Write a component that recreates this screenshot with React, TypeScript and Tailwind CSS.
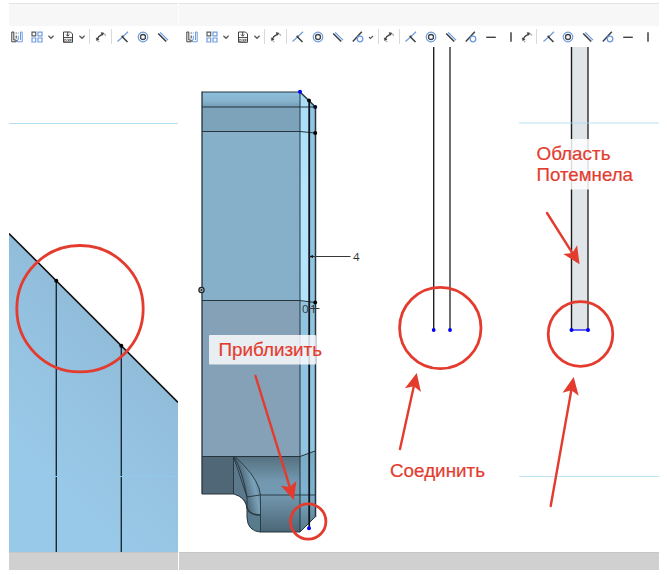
import type { ReactNode } from 'react';

const RED = '#e43b2f';
const INK = '#3f4143';
const BLUE = '#6e9bdf';

function Cell({ w, children }: { w: string; children: ReactNode }) {
  return <div className={`flex h-full shrink-0 items-center justify-center ${w}`}>{children}</div>;
}

function Icon({ children }: { children: ReactNode }) {
  return (
    <svg className="h-3 w-3 shrink-0" viewBox="0 0 12 12" fill="none" stroke={INK} strokeWidth="1.2">
      {children}
    </svg>
  );
}

const Structure = () => (
  <Icon>
    <path d="M.8 1h2v8h2.400v1.800H.8zM5.200 1.500v1.200M5.200 4.500v3" strokeWidth="1" />
    <path d="M7.300 1.500v1.200M7.300 4.500v4.300H6.500v2h4.700V1H9.500v8" stroke={BLUE} strokeWidth="1" />
  </Icon>
);
const Pattern = () => (
  <Icon>
    <path d="M1 1.200h3.700v3.600H1z" stroke="#5b5d60" />
    <path d="M7 1.200h4v3.600H7zM1 7h3.700v4H1zM7 7h4v4H7z" stroke={BLUE} />
  </Icon>
);
const Dxf = () => (
  <Icon>
    <path d="M1.500 7V1h7l2 2v4M5.700 1v4M4 3.500l1.700 1.700L7.400 3.500M1.500 6.600v4.700h9V6.600z" strokeWidth="1" />
    <text x="2" y="10.700" fontSize="4" fontWeight="bold" fill={INK} stroke="none" fontFamily="Liberation Sans, sans-serif" textLength="8">DXF</text>
  </Icon>
);
const Dimension = () => (
  <Icon>
    <path d="M2.200 8.200Q4 4.500 8 2.800" strokeWidth="1.400" />
    <path d="M1.200 6.800l.4 2.900 2.600-1.300zM6 1.500l3 .5-1.600 2.400z" fill={INK} strokeWidth=".4" />
    <path d="M3 10l1.200 1.200M9.200 2.800L11 4.500" stroke="#aaa" />
  </Icon>
);
const Coincident = () => (
  <Icon>
    <path d="M.5 10.500L4.700 6.700M6.300 5.300L11 .7" stroke={BLUE} />
    <path d="M5.500 6l5 5" strokeWidth="1.600" />
    <circle cx="5.500" cy="5.800" r="1.200" fill={INK} stroke="none" />
  </Icon>
);
const Concentric = () => (
  <Icon>
    <circle cx="6" cy="6" r="4.800" stroke={BLUE} />
    <circle cx="6" cy="6" r="2.500" strokeWidth="1.300" />
  </Icon>
);
const Parallel = () => (
  <Icon>
    <path d="M1.200 2.500l8 8" strokeWidth="1.700" />
    <path d="M3.200 1.300L11 9.200" stroke={BLUE} />
  </Icon>
);
const Tangent = () => (
  <Icon>
    <path d="M.8 10.500L9.800 .8" strokeWidth="1.500" />
    <circle cx="8" cy="8" r="2.800" stroke={BLUE} strokeWidth="1.300" />
  </Icon>
);
const Horizontal = () => <Icon><path d="M1.200 6.300h9.600" strokeWidth="1.400" /></Icon>;
const Vertical = () => <Icon><path d="M6 1.200v9.600" strokeWidth="1.500" /></Icon>;
const Chevron = () => (
  <svg className="h-1.5 w-1.5 shrink-0" viewBox="0 0 6 6" fill="none" stroke="#555" strokeWidth="1.200">
    <path d="M.4 1.800L3 4.300l2.600-2.500" />
  </svg>
);
const Tick = () => (
  <svg className="h-1.5 w-1.5 shrink-0" viewBox="0 0 6 6" fill="none" stroke="#555" strokeWidth="1.100">
    <path d="M1 3l1.400 1.500L5 2" />
  </svg>
);
const Separator = () => <div className="h-[15px] w-px bg-[#d9d9d9]" />;

function LeadingTools() {
  return (
    <>
      <Cell w="w-4"><Structure /></Cell>
      <Cell w="ml-1 w-4"><Pattern /></Cell>
      <Cell w="w-3"><Chevron /></Cell>
      <Cell w="w-[22px]"><Dxf /></Cell>
      <Cell w="w-1.5"><Chevron /></Cell>
      <Cell w="w-2"><Separator /></Cell>
      <Cell w="w-4"><Dimension /></Cell>
      <Cell w="w-1"><Separator /></Cell>
      <Cell w="w-[19px]"><Coincident /></Cell>
      <Cell w="w-[21px]"><Concentric /></Cell>
      <Cell w="w-5"><Parallel /></Cell>
    </>
  );
}

function Panel({ w, tools, children }: { w: string; tools: ReactNode; children: ReactNode }) {
  return (
    <section className={`flex h-full shrink-0 flex-col overflow-hidden ${w}`}>
      <div className="h-[23px] shrink-0 border-t border-[#e3e3e3] bg-[#f7f7f7]" />
      <div className="flex h-[21px] shrink-0 items-center">{tools}</div>
      <div className="h-[505px] shrink-0">{children}</div>
      <div className="h-[18px] shrink-0 border-t border-[#c6c6c6] bg-[#d0d0d0]" />
    </section>
  );
}

function Arrow({ x1, y1, x2, y2 }: { x1: number; y1: number; x2: number; y2: number }) {
  const angle = (Math.atan2(y2 - y1, x2 - x1) * 180) / Math.PI;
  const length = Math.hypot(x2 - x1, y2 - y1);
  return (
    <g transform={`translate(${x2} ${y2}) rotate(${angle})`} fill={RED} stroke="none">
      <path d={`M${-length} 0H-12`} stroke={RED} strokeWidth="2.400" strokeLinecap="round" />
      <path d="M1 0L-16.500-8.200-12.500 0-16.500 8.200z" />
    </g>
  );
}

function Ring({ x, y, r }: { x: number; y: number; r: number }) {
  return <circle cx={x} cy={y} r={r} fill="none" stroke={RED} strokeWidth="2.800" />;
}

function Label({ x, y, width, children }: { x: number; y: number; width: number; children: string }) {
  return (
    <text x={x} y={y} fill={RED} stroke={RED} strokeWidth=".2" fontSize="18.500" fontFamily="Liberation Sans, Arial, sans-serif" textLength={width} lengthAdjust="spacingAndGlyphs">
      {children}
    </text>
  );
}

function CloseUp() {
  return (
    <svg className="block h-full w-full" viewBox="9 47 169 505">
      <defs>
        <linearGradient id="slope" gradientUnits="userSpaceOnUse" x1="115" y1="340" x2="15" y2="440">
          <stop stopColor="#91bddb" />
          <stop offset="1" stopColor="#99c9e8" />
        </linearGradient>
      </defs>
      <path d="M9 123.500H178" stroke="#b5def0" />
      <path d="M9 233.500L178 402.500V552H9z" fill="url(#slope)" />
      <path d="M9 233.500L178 402.500" stroke="#111" strokeWidth="1.600" />
      <path d="M56.300 281V552M121.300 346V552" stroke="#1c2a33" strokeWidth="1.400" />
      <path d="M9 476.500H178" stroke="#91c8eb" />
      <circle cx="56.300" cy="280.700" r="2" />
      <circle cx="121.300" cy="345.800" r="2" />
      <Ring x={80} y={308.7} r={63.2} />
    </svg>
  );
}

function Body() {
  return (
    <svg className="block h-full w-full" viewBox="179 47 198 505">
      <defs>
        <linearGradient id="cap" x1="0" y1="0" x2="0" y2="1">
          <stop stopColor="#8dbfdc" />
          <stop offset=".6" stopColor="#88b4cf" />
          <stop offset="1" stopColor="#739bb3" />
        </linearGradient>
        <linearGradient id="edge" x1="0" y1="0" x2="0" y2="1">
          <stop stopColor="#a9dcf8" />
          <stop offset=".5" stopColor="#b6e5ff" />
          <stop offset="1" stopColor="#b3e2fc" />
        </linearGradient>
        <linearGradient id="foot" x1="0" y1="0" x2="0" y2="1">
          <stop stopColor="#55707f" />
          <stop offset=".5" stopColor="#7399b1" />
          <stop offset="1" stopColor="#719bb3" />
        </linearGradient>
        <linearGradient id="base" x1="0" y1="0" x2="0" y2="1">
          <stop stopColor="#7398af" />
          <stop offset="1" stopColor="#4b6676" />
        </linearGradient>
        <linearGradient id="fillet" gradientUnits="userSpaceOnUse" x1="243" y1="490" x2="261" y2="486">
          <stop stopColor="#4a6474" />
          <stop offset=".65" stopColor="#7ba2ba" />
          <stop offset="1" stopColor="#5e7f93" />
        </linearGradient>
        <linearGradient id="footEdge" x1="0" y1="0" x2="0" y2="1">
          <stop stopColor="#7aaac6" />
          <stop offset=".5" stopColor="#80b3d0" />
          <stop offset="1" stopColor="#567587" />
        </linearGradient>
      </defs>
      <path d="M202 92H300V107H202z" fill="url(#cap)" />
      <path d="M202 107H300V131H202z" fill="#7da3ba" />
      <path d="M202 131H300V301H202z" fill="#86b0ca" />
      <path d="M202 301H300V456H202z" fill="#84a1b7" />
      <path d="M300 92L315.500 107V303L300 300z" fill="url(#edge)" />
      <path d="M309 100L315.500 107V303H309z" fill="#91c4e0" />
      <path d="M300 300L315.500 303V451L300 456z" fill="#92c4e1" />
      <path d="M202 456H234V494H202z" fill="#4f6776" />
      <path d="M234 456H300V495H260L247 508Q245 496 234 494z" fill="url(#foot)" />
      <path d="M234 456L247 497V508Q243 496 234 494z" fill="#5b798b" />
      <path d="M235 456Q254 474 259 488Q261 495 261 502V515Q248 515 247 507V497Z" fill="url(#fillet)" />
      <path d="M247 507Q249 515 261 515V532Q247 531 247 518z" fill="#597b8e" />
      <path d="M261 495H300V532H261z" fill="url(#base)" />
      <path d="M300 456L315.500 451V517L300 532z" fill="url(#footEdge)" />
      <g fill="none" stroke="#25343d" strokeWidth="1">
        <path d="M202 92H300M202 107H315M202 131.500H300L315 133M202 300.500H300L315 302.500M202 456.500H300L315 451M202 494H234Q247 498 247 509V518Q248 531 260 532H300L315 517M300 92V532" />
        <path d="M233.500 494V456.500L247 497M235 456.500Q254 474 259 488Q261 495 260.500 502V532M247 497L260 495H315M234 456.500Q243 473 247 497V508" strokeWidth=".9" />
        <path d="M247 507.500Q249 515 260.500 515" strokeWidth="1.300" />
        <path d="M202 91.500V494" strokeWidth="1.300" />
        <path d="M300 92L315.500 107V517" strokeWidth="1.500" />
      </g>
      <path d="M309.200 100V528" stroke="#101519" strokeWidth="1.800" />
      <path d="M309 256.500H350.500M309 308.500H319.500" stroke="#37393b" />
      <path d="M309 256.500l4-1.500v3z" fill="#111" />
      <g fontFamily="Open Sans, Arial, sans-serif" fill="#303336" fontSize="11.500">
        <text x="353" y="260.800">4</text>
        <text x="302" y="313">0</text>
        <text x="310" y="313">1</text>
      </g>
      <circle cx="309" cy="100.500" r="2" />
      <circle cx="315.200" cy="107" r="2" fill="#080832" />
      <circle cx="315.200" cy="133" r="2" />
      <circle cx="315.200" cy="302.500" r="1.900" />
      <circle cx="300" cy="91.700" r="2" fill="#0000fd" />
      <circle cx="201.500" cy="290" r="2.600" fill="#b6c0c4" stroke="#222" strokeWidth="1.200" />
      <circle cx="201.500" cy="290" r="1" fill="#222" />
      <rect x="209" y="335" width="107" height="29.500" rx="1" fill="#fff" fillOpacity=".82" />
      <Label x={218.5} y={356.3} width={103.5}>Приблизить</Label>
      <Arrow x1={255.5} y1={376} x2={293.5} y2={499} />
      <Ring x={308.2} y={521.5} r={17.7} />
      <circle cx="309" cy="528.200" r="2" fill="#0000fd" />
    </svg>
  );
}

function OpenEnds() {
  return (
    <svg className="block h-full w-full" viewBox="377 47 142 505">
      <path d="M433.700 47V329" stroke="#222" strokeWidth="1.400" />
      <path d="M450 47V329" stroke="#4a4a4a" strokeWidth="1.600" />
      <circle cx="433.700" cy="330" r="1.900" fill="#0000fd" />
      <circle cx="450" cy="330" r="1.900" fill="#0000fd" />
      <Ring x={440.3} y={328} r={40.7} />
      <Arrow x1={400} y1={449} x2={416.5} y2={374} />
      <Label x={390} y={477} width={95}>Соединить</Label>
    </svg>
  );
}

function ClosedRegion() {
  return (
    <svg className="block h-full w-full" viewBox="519 47 140 505">
      <path d="M571.500 47H588V330H571.500z" fill="#e0e5e9" />
      <path d="M571.500 47V330" stroke="#1c1c1c" strokeWidth="1.400" />
      <path d="M588 47V330" stroke="#373737" strokeWidth="1.500" />
      <path d="M519 123H659" stroke="#a8dcf1" strokeOpacity=".55" strokeWidth="1.500" />
      <path d="M519 476.500H659" stroke="#c2e5f6" />
      <path d="M570 139H590V189.500H570z" fill="#fff" fillOpacity=".84" />
      <Label x={536.5} y={160} width={74}>Область</Label>
      <Label x={536.5} y={181} width={96.5}>Потемнела</Label>
      <Arrow x1={547} y1={213} x2={579} y2={263.5} />
      <path d="M571.500 330H588" stroke="#3333f6" strokeWidth="1.500" />
      <circle cx="571.500" cy="330" r="2" fill="#0000fd" />
      <circle cx="588" cy="330" r="2" fill="#0000fd" />
      <Ring x={580.5} y={334} r={32.3} />
      <Arrow x1={550.7} y1={506} x2={573.5} y2={378} />
    </svg>
  );
}

export default function App() {
  return (
    <main className="h-[575px] w-[667px] overflow-hidden bg-white pl-[9px] pt-[3px]">
      <div className="flex h-[567px]">
        <Panel w="w-[169px]" tools={<LeadingTools />}><CloseUp /></Panel>
        <Panel
          w="ml-px w-[198px]"
          tools={
            <div className="flex h-full pl-[5px]">
              <LeadingTools />
              <Cell w="w-5"><Tangent /></Cell>
              <Cell w="w-1.5"><Tick /></Cell>
            </div>
          }
        >
          <Body />
        </Panel>
        <Panel
          w="w-[142px]"
          tools={
            <>
              <Cell w="w-[3px]"><Separator /></Cell>
              <Cell w="w-[17px]"><Dimension /></Cell>
              <Cell w="w-[5px]"><Separator /></Cell>
              <Cell w="w-[18px]"><Coincident /></Cell>
              <Cell w="w-[21px]"><Concentric /></Cell>
              <Cell w="w-5"><Parallel /></Cell>
              <Cell w="w-5"><Tangent /></Cell>
              <Cell w="w-5"><Horizontal /></Cell>
              <Cell w="w-[19px]"><Vertical /></Cell>
            </>
          }
        >
          <OpenEnds />
        </Panel>
        <Panel
          w="w-[140px]"
          tools={
            <>
              <Cell w="w-[15px]"><Dimension /></Cell>
              <Cell w="w-[5px]"><Separator /></Cell>
              <Cell w="w-[19px]"><Coincident /></Cell>
              <Cell w="w-5"><Concentric /></Cell>
              <Cell w="w-5"><Parallel /></Cell>
              <Cell w="w-5"><Tangent /></Cell>
              <Cell w="w-5"><Horizontal /></Cell>
              <Cell w="w-5"><Vertical /></Cell>
            </>
          }
        >
          <ClosedRegion />
        </Panel>
      </div>
    </main>
  );
}
